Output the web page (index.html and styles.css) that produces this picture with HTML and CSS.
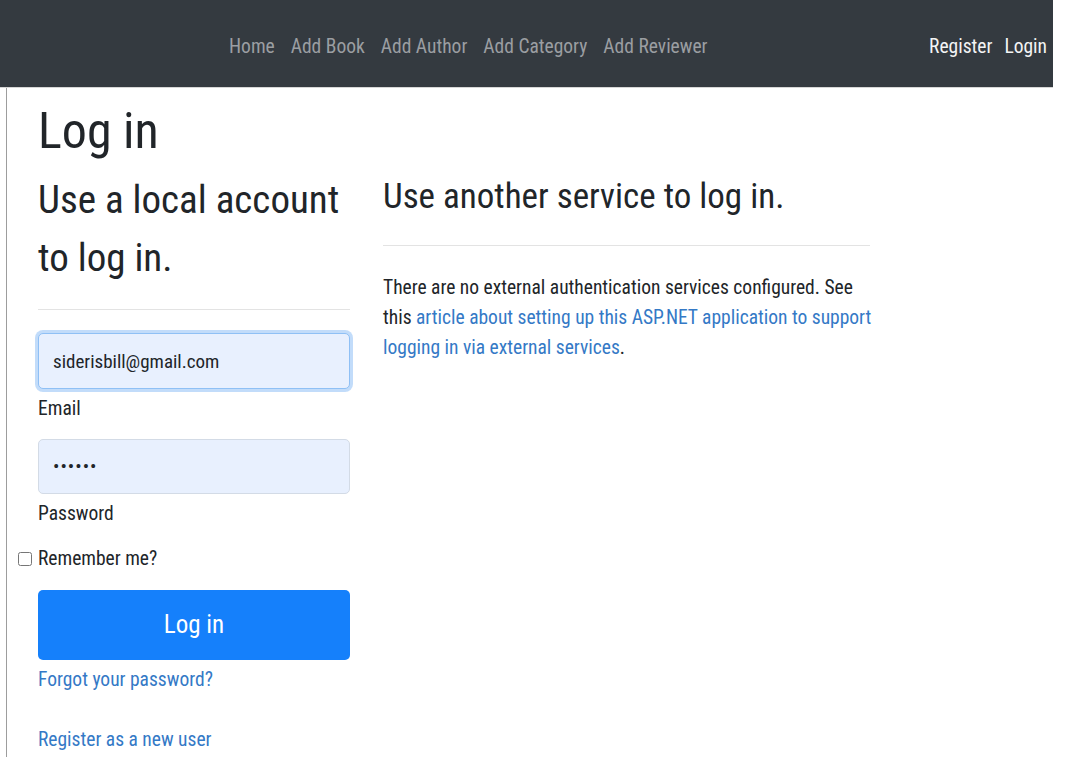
FILE: index.html
```html
<!DOCTYPE html>
<html lang="en">
<head>
<meta charset="utf-8">
<title>Log in</title>
<link rel="stylesheet" href="styles.css">
</head>
<body>
<header class="navbar">
  <nav class="nav-main">
    <a class="nav-link" href="#">Home</a>
    <a class="nav-link" href="#">Add Book</a>
    <a class="nav-link" href="#">Add Author</a>
    <a class="nav-link" href="#">Add Category</a>
    <a class="nav-link" href="#">Add Reviewer</a>
  </nav>
  <nav class="nav-user">
    <a class="nav-link light" href="#">Register</a>
    <a class="nav-link light" href="#">Login</a>
  </nav>
</header>

<main class="page">
  <h1 class="title">Log in</h1>
  <div class="row">
    <section class="col-left">
      <form class="login-form">
        <h2 class="heading-local">Use a local account to log in.</h2>
        <hr class="rule rule-left">
        <div class="field">
          <input class="form-control focused" type="email" value="siderisbill@gmail.com">
          <label class="field-label">Email</label>
        </div>
        <div class="field">
          <input class="form-control" type="password" value="123456">
          <label class="field-label">Password</label>
        </div>
        <label class="remember"><input class="check" type="checkbox">Remember me?</label>
        <button class="btn-primary" type="button">Log in</button>
        <p class="link-line first"><a href="#">Forgot your password?</a></p>
        <p class="link-line"><a href="#">Register as a new user</a></p>
      </form>
    </section>
    <section class="col-right">
      <h3 class="heading-other">Use another service to log in.</h3>
      <hr class="rule rule-right">
      <p class="info">There are no external authentication services configured. See this <a href="#">article about setting up this ASP.NET application to support logging in via external services</a>.</p>
    </section>
  </div>
</main>
</body>
</html>
```
FILE: styles.css
```css
html, body {
  margin: 0;
  padding: 0;
  background: #fff;
}

body {
  font-family: "Roboto Condensed", "Roboto", "Liberation Sans", sans-serif;
  font-stretch: condensed;
  color: #212529;
  font-size: 19.5px;
  line-height: 30px;
  overflow: hidden;
}

a {
  color: #3479c6;
  text-decoration: none;
}

/* top bar */
.navbar {
  height: 87px;
  margin-right: 26px;
  background: #343a40;
  border-bottom: 1px solid #d6d6d6;
  display: flex;
  align-items: center;
  font-size: 19.5px;
}

.nav-main {
  display: flex;
  margin-left: 221px;
  padding-top: 6px;
}

.nav-user {
  display: flex;
  margin-left: auto;
  padding-top: 6px;
}

.nav-link {
  padding: 0 8px;
  color: #9b9ea2;
}

.nav-user .nav-link {
  padding: 0 6px;
}

.nav-link.light {
  color: #f3f4f5;
}

/* content area */
.page {
  margin-left: 6px;
  border-left: 1px solid #9d9d9d;
  padding: 13px 0 0 31px;
  height: 656px;
}

.title {
  margin: 0;
  font-size: 50px;
  line-height: 60px;
  font-weight: 400;
}

.row {
  display: flex;
  gap: 33px;
  margin-top: 10px;
}

.col-left {
  width: 312px;
}

.col-right {
  width: 487px;
}

.heading-local {
  margin: 0;
  font-size: 39px;
  line-height: 58px;
  font-weight: 400;
}

.heading-other {
  margin: 5px 0 0;
  font-size: 35px;
  line-height: 42px;
  font-weight: 400;
}

.rule {
  border: 0;
  border-top: 1px solid #e3e3e3;
  margin: 0;
}

.rule-left {
  margin-top: 22px;
  margin-bottom: 23px;
}

.rule-right {
  margin-top: 27px;
  margin-bottom: 27px;
}

.info {
  margin: 0 -10px 0 0;
}

/* form */
.field {
  margin-bottom: 15px;
}

.form-control {
  display: block;
  box-sizing: border-box;
  width: 100%;
  height: 56px;
  padding: 0 14px;
  font: inherit;
  font-size: 19px;
  color: #212529;
  background: #e8f0fe;
  border: 1px solid #d3dbe6;
  border-radius: 5px;
  outline: none;
}

.form-control.focused {
  border-color: #8fc0f5;
  box-shadow: 0 0 0 3px rgba(80, 155, 240, 0.35);
}

.form-control[type="password"] {
  height: 55px;
  letter-spacing: 1px;
}

.field-label {
  display: block;
  margin-top: 5px;
}

.remember {
  display: flex;
  align-items: center;
  height: 30px;
  margin-top: 1px;
}

.check {
  width: 14px;
  height: 14px;
  margin: 0 6px 0 -20px;
}

.btn-primary {
  display: block;
  width: 100%;
  height: 70px;
  margin-top: 16px;
  border: 0;
  border-radius: 5px;
  background: #1580fb;
  color: #fff;
  font: inherit;
  font-size: 25px;
  cursor: pointer;
}

.link-line {
  margin: 5px 0 0;
}

.link-line + .link-line {
  margin-top: 30px;
}
```
